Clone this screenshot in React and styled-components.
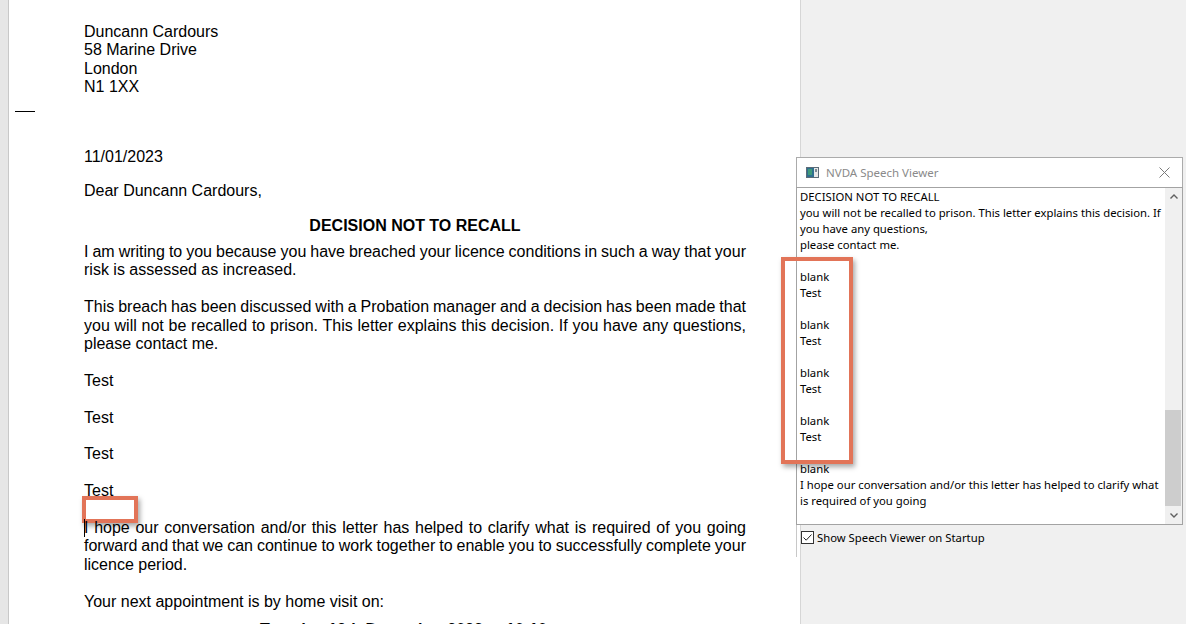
import React from "react";
import styled, { createGlobalStyle } from "styled-components";

const GlobalStyle = createGlobalStyle`
  html, body {
    margin: 0;
    padding: 0;
    background: #f0f0f0;
    overflow: hidden;
  }
`;

const Screen = styled.div`
  position: relative;
  display: flex;
  height: 100vh;
  overflow: hidden;
  background: #f0f0f0;
`;

const Gutter = styled.div`
  flex: none;
  width: 8px;
  background: #e6e6e6;
  border-right: 1px solid #c8c8c8;
`;

const Page = styled.div`
  flex: none;
  box-sizing: border-box;
  width: 792px;
  padding: 23px 54px 0 75px;
  background: #fff;
  border-right: 1px solid #d6d6d6;
  font-family: "Liberation Sans", Arial, sans-serif;
  font-size: 16px;
  line-height: 18.4px;
  color: #000;
`;

const Para = styled.div`
  position: relative;
  margin: ${(p) => p.$gap || 0}px 0 0;
  min-height: 18.4px;
  text-align: ${(p) => p.$align || "left"};
  font-weight: ${(p) => (p.$bold ? 700 : 400)};
`;

/* a full line of a justified paragraph, stretched edge to edge */
const FullLine = styled.div`
  white-space: nowrap;
  word-spacing: -1px;
  text-align: justify;
  text-align-last: justify;
`;

const FoldMark = styled.div`
  width: 20px;
  height: 1px;
  margin: 14px 0 0 -69px;
  background: #000;
`;

const Caret = styled.span`
  display: inline-block;
  width: 0;
  height: 18px;
  margin-right: -1px;
  border-left: 1px solid #000;
  vertical-align: -4px;
`;

const Callout = styled.div`
  position: absolute;
  box-sizing: border-box;
  border: 4px solid #e27458;
  box-shadow: 2px 3px 5px rgba(0, 0, 0, 0.35);
  pointer-events: none;
`;

const Window = styled.div`
  position: absolute;
  left: 796px;
  top: 157px;
  width: 387px;
  font-family: "Noto Sans", "Open Sans", sans-serif;
  font-size: 11.3px;
  color: #000;
`;

const TitleBar = styled.div`
  box-sizing: border-box;
  height: 30px;
  display: flex;
  align-items: center;
  padding: 0 12px 0 9px;
  background: #fff;
  border: 1px solid #ababab;
  border-bottom: none;
`;

const Title = styled.span`
  flex: 1;
  margin-left: 7px;
  font-size: 11.5px;
  color: #8a8a8a;
`;

const ListBox = styled.div`
  box-sizing: border-box;
  height: 338px;
  display: flex;
  background: #fff;
  border: 1px solid #a3a3a3;
`;

const Lines = styled.div`
  flex: 1;
  padding: 1px 0 0 3px;
`;

const Line = styled.div`
  height: 16px;
  line-height: 16px;
  white-space: nowrap;
`;

const ScrollBar = styled.div`
  flex: none;
  width: 17px;
  display: flex;
  flex-direction: column;
  background: #f0f0f0;
`;

const Arrow = styled.div`
  height: 17px;
  display: flex;
  align-items: center;
  justify-content: center;
`;

const Track = styled.div`
  flex: 1;
  display: flex;
  flex-direction: column;
  justify-content: flex-end;
  padding: 0 1px 0 0;
`;

const Thumb = styled.div`
  height: 96px;
  margin-bottom: 1px;
  background: #cdcdcd;
`;

const Footer = styled.div`
  box-sizing: border-box;
  height: 32px;
  display: flex;
  align-items: center;
  gap: 3px;
  padding: 0 0 8px 4px;
  border-left: 1px solid #c8c8c8;
  font-size: 11.3px;
`;

const Check = styled.span`
  box-sizing: border-box;
  width: 13px;
  height: 13px;
  display: flex;
  align-items: center;
  justify-content: center;
  background: #fff;
  border: 1px solid #333;
`;

const AppIcon = () => (
  <svg width="13" height="11" viewBox="0 0 13 11">
    <rect x="0.5" y="0.5" width="12" height="10" fill="#e8e8e8" stroke="#5b6b77" />
    <rect x="1" y="1" width="7" height="9" fill="#2f6f8f" />
    <rect x="2" y="2" width="4" height="6" fill="#3f9a7a" />
    <rect x="9" y="2" width="2" height="3" fill="#7d8a94" />
  </svg>
);

const CloseIcon = () => (
  <svg width="11" height="11" viewBox="0 0 11 11">
    <path d="M0.5 0.5 L10.5 10.5 M10.5 0.5 L0.5 10.5" stroke="#7a7a7a" strokeWidth="1" fill="none" />
  </svg>
);

const Chevron = ({ down }) => (
  <svg width="8" height="5" viewBox="0 0 8 5">
    <path
      d={down ? "M0.5 0.5 L4 4 L7.5 0.5" : "M0.5 4.5 L4 1 L7.5 4.5"}
      stroke="#606060"
      strokeWidth="1.4"
      fill="none"
    />
  </svg>
);

const Tick = () => (
  <svg width="11" height="11" viewBox="0 0 11 11">
    <path d="M1.5 5.5 L4.2 8.2 L9.5 2.5" stroke="#222" strokeWidth="1" fill="none" />
  </svg>
);

const speech = [
  "DECISION NOT TO RECALL",
  "you will not be recalled to prison. This letter explains this decision. If",
  "you have any questions,",
  "please contact me.",
  "",
  "blank",
  "Test",
  "",
  "blank",
  "Test",
  "",
  "blank",
  "Test",
  "",
  "blank",
  "Test",
  "",
  "blank",
  "I hope our conversation and/or this letter has helped to clarify what",
  "is required of you going",
];

const App = () => {
  return (
    <Screen>
      <GlobalStyle />
      <Gutter />
      <Page>
        <Para>
          Duncann Cardours
          <br />
          58 Marine Drive
          <br />
          London
          <br />
          N1 1XX
        </Para>
        <FoldMark />
        <Para $gap={36.4}>11/01/2023</Para>
        <Para $gap={15.6}>Dear Duncann Cardours,</Para>
        <Para $gap={16.6} $align="center" $bold>
          DECISION NOT TO RECALL
        </Para>
        <Para $gap={7.6}>
          <FullLine>
            I am writing to you because you have breached your licence conditions in such a way that your
          </FullLine>
          risk is assessed as increased.
        </Para>
        <Para $gap={18.4}>
          <FullLine>
            This breach has been discussed with a Probation manager and a decision has been made that
          </FullLine>
          <FullLine>
            you will not be recalled to prison. This letter explains this decision. If you have any questions,
          </FullLine>
          please contact me.
        </Para>
        <Para $gap={18.4}>Test</Para>
        <Para $gap={18.4}>Test</Para>
        <Para $gap={18.4}>Test</Para>
        <Para $gap={18.4}>Test</Para>
        <Para>
          <Callout style={{ left: -2, top: -5, width: 56, height: 27 }} />
        </Para>
        <Para>
          <FullLine>
            <Caret />I hope our conversation and/or this letter has helped to clarify what is required of you
            going
          </FullLine>
          <FullLine>
            forward and that we can continue to work together to enable you to successfully complete your
          </FullLine>
          licence period.
        </Para>
        <Para $gap={18.4}>Your next appointment is by home visit on:</Para>
        <Para $gap={10} $align="center" $bold>
          Tuesday 12th December 2023 at 10:10am
        </Para>
      </Page>

      <Window>
        <TitleBar>
          <AppIcon />
          <Title>NVDA Speech Viewer</Title>
          <CloseIcon />
        </TitleBar>
        <ListBox>
          <Lines>
            {speech.map((t, i) => (
              <Line key={i}>{t}</Line>
            ))}
          </Lines>
          <ScrollBar>
            <Arrow>
              <Chevron />
            </Arrow>
            <Track>
              <Thumb />
            </Track>
            <Arrow>
              <Chevron down />
            </Arrow>
          </ScrollBar>
        </ListBox>
        <Footer>
          <Check>
            <Tick />
          </Check>
          Show Speech Viewer on Startup
        </Footer>
        <Callout style={{ left: -15, top: 100, width: 72, height: 207 }} />
      </Window>
    </Screen>
  );
};

export default App;
